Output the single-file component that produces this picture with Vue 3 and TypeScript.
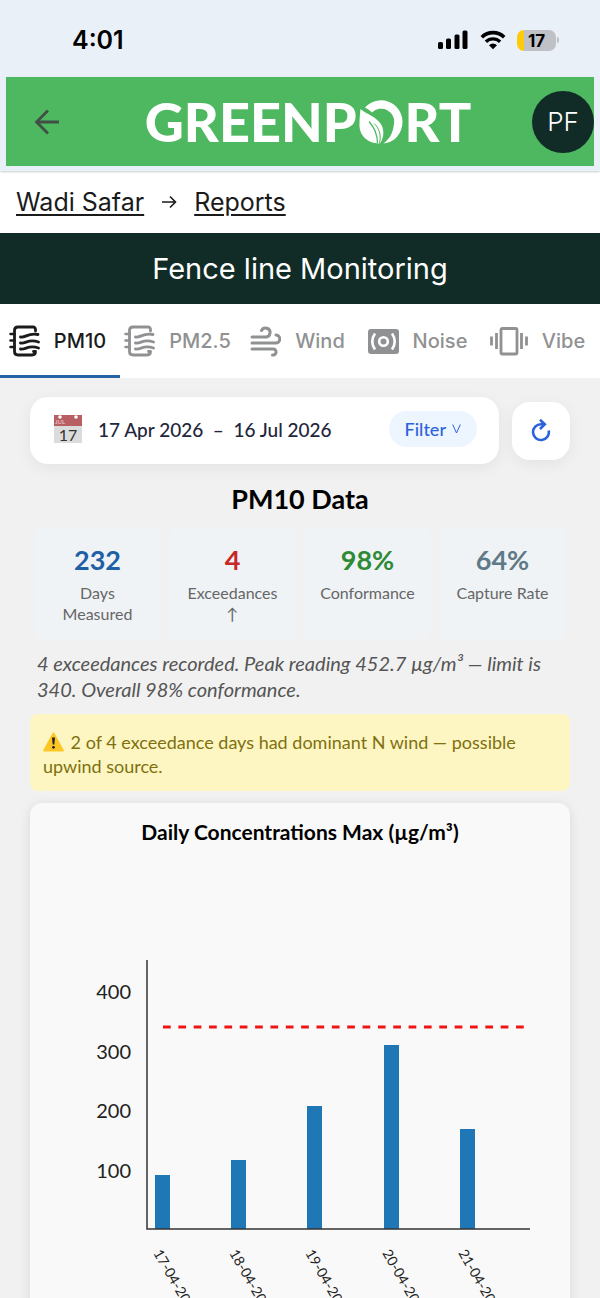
<script setup lang="ts">
import { ref } from 'vue'

interface Tab { id: string; label: string; icon: 'dust' | 'wind' | 'noise' | 'vibe' }
interface Stat { value: string; label: string; tone: string }
interface Reading { date: string; value: number }

const tabs: Tab[] = [
  { id: 'pm10', label: 'PM10', icon: 'dust' },
  { id: 'pm25', label: 'PM2.5', icon: 'dust' },
  { id: 'wind', label: 'Wind', icon: 'wind' },
  { id: 'noise', label: 'Noise', icon: 'noise' },
  { id: 'vibe', label: 'Vibe', icon: 'vibe' },
]
const active = ref('pm10')

const stats: Stat[] = [
  { value: '232', label: 'Days Measured', tone: 'blue' },
  { value: '4', label: 'Exceedances ↑', tone: 'red' },
  { value: '98%', label: 'Conformance', tone: 'green' },
  { value: '64%', label: 'Capture Rate', tone: 'slate' },
]

const readings: Reading[] = [
  { date: '17-04-2026', value: 91 },
  { date: '18-04-2026', value: 117 },
  { date: '19-04-2026', value: 207 },
  { date: '20-04-2026', value: 310 },
  { date: '21-04-2026', value: 168 },
]
const ticks = [400, 300, 200, 100]
const limit = 340
const baseY = 379
const axisX = 117
const yOf = (v: number): number => Math.round(baseY - v * 0.594)
const xOf = (i: number): number => 125 + Math.round(i * 76.2)
</script>

<template>
  <div class="screen">
    <div class="status">
      <span class="clock">4:01</span>
      <div class="indicators">
        <svg width="31" height="20" viewBox="0 0 31 20" aria-label="Signal">
          <rect x="0" y="12" width="5" height="7" rx="1.5" />
          <rect x="8" y="8.500" width="5" height="10.500" rx="1.5" />
          <rect x="16.500" y="4.500" width="5" height="14.500" rx="1.5" />
          <rect x="24.500" y="0.500" width="5" height="18.500" rx="1.5" />
        </svg>
        <svg width="26" height="20" viewBox="0 0 26 20" aria-label="Wi-Fi">
          <path d="M1.800 7.200a16 16 0 0 1 22.400 0" fill="none" stroke="#000" stroke-width="3.600" />
          <path d="M5.900 11.700a10.200 10.200 0 0 1 14.200 0" fill="none" stroke="#000" stroke-width="3.300" />
          <path d="M13 19.200l-4-4a5.700 5.700 0 0 1 8 0z" />
        </svg>
        <div class="battery"><span class="cell">17</span><span class="nub"></span></div>
      </div>
    </div>

    <header class="top">
      <div class="brandbar">
        <button class="back" type="button" aria-label="Back">
          <svg width="26" height="26" viewBox="0 0 26 26" fill="none" stroke="#414f48" stroke-width="2.800">
            <path d="M25 13H2.500M14 1.500L2.500 13L14 24.500" />
          </svg>
        </button>
        <div class="logo">
          <span>GREENP</span>
          <svg width="44" height="44" viewBox="0 0 44 44" aria-label="O">
            <path d="M6 7.500A21.500 21.500 0 0 1 43.500 21.500C43.500 33 36 42.500 24.500 43.500C30 39 33.500 35 35 24A13 13 0 0 0 13 12.500Q10 9.500 6 7.500z" fill="#fff" />
            <path d="M1.500 9C8 14.500 18 17 22.500 25C26 32 24 39 21 43.500C8 43.500 0 35 .5 24C.5 18 1 14 1.500 9z" fill="#fff" />
            <path d="M10 21.500C15 27 18.500 33 18.500 43.500" fill="none" stroke="#4db85f" stroke-width="1.300" />
            <path d="M15 23.500C20 28 22.500 34 20.500 43.500" fill="none" stroke="#4db85f" stroke-width="1" />
          </svg>
          <span>RT</span>
        </div>
        <button class="avatar" type="button">PF</button>
      </div>
    </header>

    <nav class="crumbs" aria-label="Breadcrumb">
      <a href="#site">Wadi Safar</a>
      <svg width="16" height="14" viewBox="0 0 16 14" fill="none" stroke="#1b1b1b" stroke-width="1.600">
        <path d="M1 7H14M9 1.500L14.500 7L9 12.500" />
      </svg>
      <a href="#reports">Reports</a>
    </nav>

    <h1 class="title">Fence line Monitoring</h1>

    <div class="tabs" role="tablist">
      <button
        v-for="tab in tabs" :key="tab.id" type="button" role="tab" class="tab"
        :class="{ on: active === tab.id }" :aria-selected="active === tab.id" @click="active = tab.id"
      >
        <svg v-if="tab.icon === 'dust'" width="31" height="32" viewBox="0 0 31 32" fill="none" stroke="currentColor" stroke-width="2.800" stroke-linecap="round" stroke-linejoin="round">
          <path d="M26.500 6V4.500Q26.500 2 24 2H9Q5.500 2 5.500 5.500V26.500Q5.500 30 9 30H23Q26.500 30 26.500 26.500H24.500" />
          <path d="M5.500 9H1.500M5.500 15.500H1.500M5.500 22H1.500" stroke-width="2.500" />
          <path d="M11.500 12C17 13 18.500 7.500 29 9.500M11.500 18C17 19 19 13.500 29.500 17M11.500 24C17 25 19 19.500 29.500 23" />
        </svg>
        <svg v-else-if="tab.icon === 'wind'" width="31" height="32" viewBox="0 0 31 32" fill="none" stroke="currentColor" stroke-width="3" stroke-linecap="round">
          <path d="M2 12H15.500A4.500 4.500 0 1 0 11.500 5.500M2 18H25.500A4 4 0 0 0 26 10M2 24H23.500A3 3 0 0 1 22.500 30" />
        </svg>
        <svg v-else-if="tab.icon === 'noise'" width="31" height="32" viewBox="0 0 31 32">
          <rect x="0" y="4" width="31" height="25" rx="3" fill="currentColor" />
          <g fill="none" stroke="#fff" stroke-width="2.600">
            <circle cx="15.500" cy="16.500" r="4.300" />
            <path d="M7 8.500Q1.500 16.500 7 24.500M24 8.500Q29.500 16.500 24 24.500" />
          </g>
        </svg>
        <svg v-else width="38" height="32" viewBox="0 0 38 32" fill="none" stroke="currentColor" stroke-width="2.800">
          <rect x="11" y="3.500" width="16" height="25.500" rx="1.500" />
          <path d="M1.500 11.500V20.500M6.500 8V24M31.500 8V24M36.500 11.500V20.500" />
        </svg>
        <span>{{ tab.label }}</span>
      </button>
    </div>

    <main class="content">
      <div class="filters">
        <div class="range">
          <svg class="cal" width="28" height="28" viewBox="0 0 28 28">
            <rect width="28" height="28" fill="#dcdcdc" />
            <rect width="28" height="11" fill="#b85f63" />
            <circle cx="6" cy="2" r="1.800" fill="#fff" /><circle cx="22" cy="2" r="1.800" fill="#fff" />
            <text x="1" y="9" class="cal-month">JUL</text>
            <text x="14" y="26" text-anchor="middle" class="cal-day">17</text>
          </svg>
          <span class="dates">17 Apr 2026 &nbsp;–&nbsp; 16 Jul 2026</span>
          <button class="filter" type="button">
            Filter
            <svg width="9" height="10" viewBox="0 0 9 10" fill="none" stroke="currentColor"><path d="M.7.500L4.500 9L8.300.500" /></svg>
          </button>
        </div>
        <button class="refresh" type="button" aria-label="Refresh">
          <svg width="20" height="24" viewBox="0 0 20 24" fill="none" stroke="#2b63dd" stroke-width="2.600">
            <path d="M17.700 11.500A7.900 7.900 0 1 1 10 5.200H13.500M9 .8L13.800 5.200L9 10" />
          </svg>
        </button>
      </div>

      <h2 class="heading">PM10 Data</h2>

      <div class="stats">
        <div v-for="s in stats" :key="s.label" class="stat">
          <strong :class="s.tone">{{ s.value }}</strong>
          <span>{{ s.label }}</span>
        </div>
      </div>

      <p class="summary">4 exceedances recorded. Peak reading 452.7 µg/m³ — limit is 340. Overall 98% conformance.</p>

      <p class="alert">
        <svg width="21" height="20" viewBox="0 0 21 20" aria-label="Warning">
          <path d="M10.500 1.500L19.800 18.500H1.200z" fill="#fdc726" stroke="#fdc726" stroke-width="2" stroke-linejoin="round" />
          <path d="M9 5.500H12L11.300 12.500H9.700z" fill="#222" /><circle cx="10.500" cy="15.300" r="1.400" fill="#222" />
        </svg>
        2 of 4 exceedance days had dominant N wind — possible upwind source.
      </p>

      <section class="card">
        <h3>Daily Concentrations Max (µg/m³)</h3>
        <svg class="chart" viewBox="0 0 540 500" role="img" aria-label="Daily concentrations">
          <text v-for="t in ticks" :key="t" class="tick" x="101" :y="yOf(t) + 8" text-anchor="end">{{ t }}</text>
          <rect v-for="(r, i) in readings" :key="r.date" :x="xOf(i)" :y="yOf(r.value)" width="15" :height="baseY - yOf(r.value)" fill="#2077b5" />
          <path :d="`M${axisX} 110V${baseY}H500`" fill="none" stroke="#333" stroke-width="1.500" />
          <line x1="133" x2="495" :y1="yOf(limit)" :y2="yOf(limit)" stroke="#ee1515" stroke-width="3.200" stroke-dasharray="7.700 7.650" />
          <text v-for="(r, i) in readings" :key="r.date" class="date" :transform="`translate(${xOf(i) - 2} 403) rotate(60)`">{{ r.date }}</text>
        </svg>
      </section>
    </main>
  </div>
</template>

<style>
body { margin: 0; }
</style>

<style scoped>
.screen { height: 100vh; display: flex; flex-direction: column; overflow: hidden; background: #f1f1f1; font-family: Inter, "Liberation Sans", sans-serif; color: #1b1b1b; }
.screen > * { flex-shrink: 0; }
button { border: 0; padding: 0; background: none; font: inherit; color: inherit; cursor: pointer; }
svg { flex-shrink: 0; }

.status { height: 77px; padding: 3px 41px 0 72px; box-sizing: border-box; display: flex; align-items: center; justify-content: space-between; background: #eaf0f8; color: #000; }
.clock { font-size: 25px; font-weight: 600; }
.indicators { display: flex; align-items: center; gap: 11px; }
.battery { display: flex; align-items: center; gap: 1px; }
.cell { width: 39px; height: 21px; border-radius: 7px; background: linear-gradient(90deg, #fdcb0a 7px, #bfc1c6 7px); font-size: 17px; font-weight: 700; line-height: 22px; text-align: center; }
.nub { width: 2px; height: 6px; border-radius: 0 2px 2px 0; background: #bfc1c6; }

.top { position: relative; padding: 0 6px 5px; background: #eaf0f8; box-shadow: 0 1px 2px #0003; }
.brandbar { height: 89px; display: flex; align-items: center; justify-content: space-between; background: #4db85f; }
.back { width: 78px; height: 62px; padding-left: 28px; display: flex; align-items: center; }
.logo { display: flex; align-items: center; gap: 2px; color: #fff; font-family: Lato, sans-serif; font-size: 54px; font-weight: 900; line-height: 60px; }
.avatar { width: 62px; height: 62px; border-radius: 50%; background: #112b27; color: #fff; font-size: 26px; font-weight: 300; }

.crumbs { height: 62px; padding: 0 16px; display: flex; align-items: center; gap: 17px; background: #fff; font-size: 25px; line-height: 30px; }
.crumbs a { color: inherit; text-decoration-thickness: 2px; text-underline-offset: 3px; }
.title { margin: 0; padding: 16px 0 15px; background: #112b27; color: #fff; text-align: center; font-size: 29px; font-weight: 400; line-height: 40px; }

.tabs { display: grid; grid-template-columns: repeat(5, 1fr); background: #fff; }
.tab { height: 74px; padding: 3px 5px 0 0; box-sizing: border-box; border-bottom: 3px solid transparent; display: flex; align-items: center; justify-content: center; gap: 14px; color: #909192; font-size: 20px; font-weight: 500; }
.tab.on { color: #1b1b1b; border-color: #2463a5; }

.content { flex: 1 1 0; min-height: 0; overflow-y: auto; scrollbar-width: none; padding: 19px 30px; font-family: Lato, "Noto Sans", sans-serif; }
.filters { display: flex; align-items: center; gap: 13px; }
.range { flex: 1; height: 67px; padding: 0 22px 3px 24px; box-sizing: border-box; display: flex; align-items: center; background: #fff; border-radius: 18px; box-shadow: 0 4px 16px #0000000f; }
.cal-month { font-size: 6px; fill: #f0d5d5; }
.cal-day { font-size: 16px; fill: #333; }
.dates { margin-left: 16px; flex: 1; font-size: 19px; font-weight: 500; color: #22263c; white-space: nowrap; }
.filter { height: 36px; padding: 0 16px; display: flex; align-items: center; gap: 6px; border-radius: 18px; background: #edf5ff; color: #2b63dd; font-size: 18px; font-weight: 500; }
.refresh { width: 58px; height: 58px; display: flex; align-items: center; justify-content: center; background: #fff; border-radius: 18px; box-shadow: 0 4px 16px #0000000f; }

.heading { margin: 19px 0 13px; text-align: center; font-size: 27px; line-height: 32px; font-weight: 700; color: #000; }
.stats { padding: 0 4px; display: grid; grid-template-columns: repeat(4, 1fr); gap: 8px; }
.stat { min-height: 111px; padding: 16px 16px 12px; box-sizing: border-box; display: flex; flex-direction: column; align-items: center; gap: 6px; background: #eff3f6; border-radius: 8px; text-align: center; }
.stat strong { font-size: 27px; line-height: 32px; }
.stat span { font-size: 16px; line-height: 21px; color: #666; }
.blue { color: #1f5fa6; }
.red { color: #c62828; }
.green { color: #2f8a36; }
.slate { color: #5f7a86; }

.summary { margin: 11px 7px 12px; font-size: 20px; line-height: 26px; font-style: italic; color: #555; }
.alert { margin: 0 0 12px; padding: 16px 13px 13px; border-radius: 8px; background: #fdf6c3; color: #80700f; font-size: 18px; line-height: 24px; }
.alert svg { vertical-align: -3px; margin-right: 2px; }

.card { padding-top: 15px; border-radius: 12px; background: #f9f9f9; box-shadow: 0 2px 12px #0000001a; }
.card h3 { margin: 0; text-align: center; font-size: 21px; line-height: 28px; font-weight: 700; color: #000; }
.chart { display: block; width: 100%; margin-top: 4px; }
.tick { font-size: 20px; fill: #222; }
.date { font-size: 14px; fill: #222; }
</style>
